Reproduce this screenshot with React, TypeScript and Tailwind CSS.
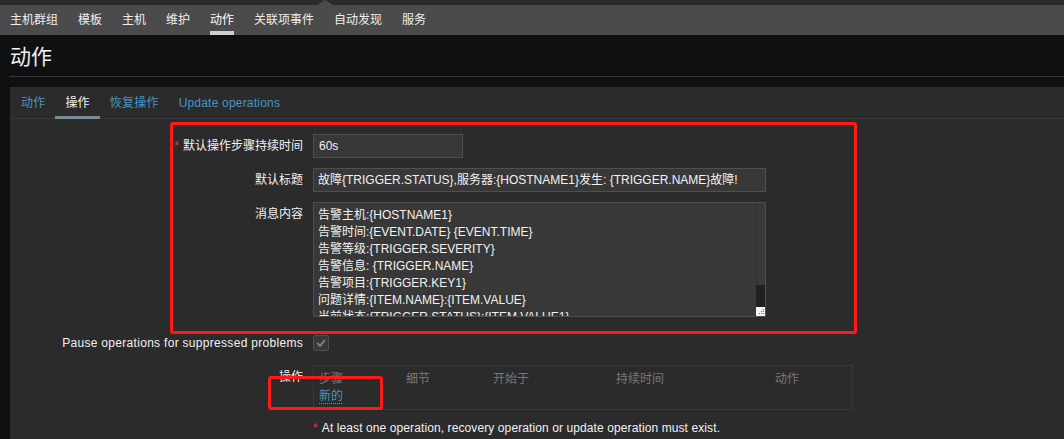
import React from 'react';

const navItems = ['主机群组', '模板', '主机', '维护', '动作', '关联项事件', '自动发现', '服务'];
const tabs = ['动作', '操作', '恢复操作', 'Update operations'];
const messageLines = [
  '告警主机:{HOSTNAME1}',
  '告警时间:{EVENT.DATE} {EVENT.TIME}',
  '告警等级:{TRIGGER.SEVERITY}',
  '告警信息: {TRIGGER.NAME}',
  '告警项目:{TRIGGER.KEY1}',
  '问题详情:{ITEM.NAME}:{ITEM.VALUE}',
  '当前状态:{TRIGGER.STATUS}:{ITEM.VALUE1}',
];

const FormRow = ({ label, required, children, className = '', labelClass = '' }: { label: string; required?: boolean; children: React.ReactNode; className?: string; labelClass?: string }) => (
  <div className={`flex gap-[10px] ${className}`}>
    <div className={`w-[293px] shrink-0 text-right leading-[24px] text-[#f2f2f2] ${labelClass}`}>
      {required && <span className="mr-[4px] text-[#e33734]">*</span>}
      {label}
    </div>
    {children}
  </div>
);

export default function App() {
  return (
    <div className="relative h-[439px] w-[1064px] overflow-hidden bg-[#0e1012] font-['Liberation_Sans','Noto_Sans_CJK_SC',sans-serif] text-[12px]">
      {/* top strip with menu notch */}
      <div className="relative h-[5px] bg-[#2b2b2b]">
        <svg className="absolute left-[317px] top-0" width="16" height="5" viewBox="0 0 16 5">
          <polygon points="0,5 8,0 16,5" fill="#4b4b4b" />
        </svg>
      </div>

      <nav className="flex h-[30px] bg-[#4b4b4b]">
        {navItems.map((item) => (
          <div
            key={item}
            className={`flex h-full items-center px-[10px] ${item === '动作' ? 'text-white' : 'text-[#eeeeee]'}`}
          >
            <span className={`relative flex h-full items-center ${item === '动作' ? 'border-b-[4px] border-[#cfcfcf] pt-[4px]' : ''}`}>{item}</span>
          </div>
        ))}
      </nav>

      <header className="ml-[10px] flex h-[42px] items-center border-b border-[#383838] pt-[2px]">
        <h1 className="text-[21px] leading-none text-[#f2f2f2]">动作</h1>
      </header>

      <main className="ml-[10px] mt-[10px] h-[400px] bg-[#2b2b2b]">
        <div className="flex h-[32px] border-b border-[#383838] pl-[1px]">
          {tabs.map((tab) => (
            <div
              key={tab}
              className={`mb-[-1px] flex h-[32px] items-center border-b-[3px] px-[10px] pt-[2px] tracking-[0.2px] ${tab === '操作' ? 'border-[#768d99] text-[#f2f2f2]' : 'border-transparent text-[#4796c4]'}`}
            >
              {tab}
            </div>
          ))}
        </div>

        <div className="mt-[15px] flex flex-col">
          <FormRow label="默认操作步骤持续时间" required>
            <div className="h-[24px] w-[150px] border border-[#4f4f4f] bg-[#383838] pl-[5px] leading-[22px] text-[#f2f2f2]">60s</div>
          </FormRow>

          <FormRow label="默认标题" className="mt-[10px]">
            <div className="h-[24px] w-[453px] overflow-hidden whitespace-nowrap border border-[#4f4f4f] bg-[#383838] pl-[4px] leading-[22px] text-[#f2f2f2]">
              故障{'{TRIGGER.STATUS}'},服务器:{'{HOSTNAME1}'}发生: {'{TRIGGER.NAME}'}故障!
            </div>
          </FormRow>

          <FormRow label="消息内容" className="mt-[10px]">
            <div className="flex h-[115px] w-[453px] border border-[#4f4f4f] bg-[#383838]">
              <div className="flex-1 overflow-hidden pl-[4px] pt-[4px] leading-[17px] text-[#f2f2f2]">
                {messageLines.map((line) => (
                  <div key={line} className="whitespace-nowrap">{line}</div>
                ))}
              </div>
              <div className="flex w-[9px] flex-col">
                <div className="flex-1 border-l border-[#2f2f2f] bg-[#3a3a3a]" />
                <div className="h-[22px] bg-[#202020]" />
                <div className="flex h-[9px] items-end justify-end bg-[#f5f5f5] p-[1px]">
                  <svg width="6" height="6" viewBox="0 0 6 6">
                    <rect x="5" y="0" width="1" height="1" fill="#666" />
                    <rect x="3" y="2" width="1" height="1" fill="#666" />
                    <rect x="5" y="2" width="1" height="1" fill="#666" />
                    <rect x="1" y="4" width="1" height="1" fill="#666" />
                    <rect x="3" y="4" width="1" height="1" fill="#666" />
                    <rect x="5" y="4" width="1" height="1" fill="#666" />
                  </svg>
                </div>
              </div>
            </div>
          </FormRow>

          <FormRow label="Pause operations for suppressed problems" className="mt-[14px]" labelClass="tracking-[0.3px]">
            <div className="flex h-[24px] items-center">
              <div className="flex h-[16px] w-[16px] items-center justify-center rounded-[2px] border border-[#4f4f4f] bg-[#383838]">
                <svg width="10" height="8" viewBox="0 0 10 8">
                  <path d="M1 4 L4 7 L9 1" fill="none" stroke="#6f808c" strokeWidth="2" />
                </svg>
              </div>
            </div>
          </FormRow>

          <FormRow label="操作" className="mt-[10px]">
            <div className="h-[45px] w-[540px] border border-[#383838] pl-[5px] pt-[5px] leading-[17px]">
              <div className="flex text-[#787878]">
                <div className="w-[87px]">步骤</div>
                <div className="w-[87px]">细节</div>
                <div className="w-[123px]">开始于</div>
                <div className="w-[159px]">持续时间</div>
                <div>动作</div>
              </div>
              <div>
                <span className="text-[#4796c4] underline decoration-dotted underline-offset-[3px]">新的</span>
              </div>
            </div>
          </FormRow>

          <div className="ml-[303px] mt-[10px] leading-[17px] tracking-[0.1px] text-[#f2f2f2]">
            <span className="mr-[4px] text-[#e33734]">*</span>
            At least one operation, recovery operation or update operation must exist.
          </div>
        </div>
      </main>

      {/* annotation boxes */}
      <div className="pointer-events-none absolute left-[170px] top-[122px] h-[212px] w-[687px] rounded-[3px] border-[3px] border-[#ff1a1a]" />
      <div className="pointer-events-none absolute left-[268px] top-[376px] h-[34px] w-[115px] rounded-[3px] border-[3px] border-[#ff1a1a]" />
    </div>
  );
}
